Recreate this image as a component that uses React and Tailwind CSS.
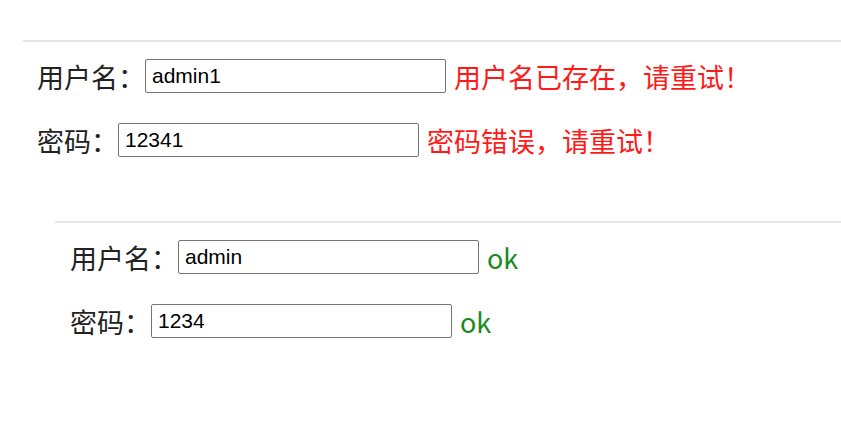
const LABEL_FONT = "font-['Microsoft_YaHei','Noto_Sans_CJK_SC',sans-serif]";

function Field({ label, value, msg, ok, className = "" }) {
  return (
    <div className={`flex items-center h-[34px] ${className}`}>
      <span className="text-[27px] leading-none text-[#222]">{label}</span>
      <input
        readOnly
        value={value}
        className="w-[301px] h-[34px] border border-[#767676] rounded-[2px] px-[6px] text-[21px] text-black font-['Liberation_Sans',Arial,sans-serif] outline-none"
      />
      <span
        className={`ml-[8px] text-[27px] leading-none ${ok ? "text-[#1a8a1a]" : "text-[#ff1a1a]"}`}
      >
        {msg}
      </span>
    </div>
  );
}

export default function App() {
  return (
    <div className={`w-[841px] h-[440px] bg-white overflow-hidden ${LABEL_FONT}`}>
      {/* 失败的情况 */}
      <div className="ml-[23px] mt-[40px]">
        <div className="h-[2px] bg-[#e6e6e6]" />
        <div className="pl-[14px]">
          <Field className="mt-[17px]" label="用户名：" value="admin1" msg="用户名已存在，请重试！" />
          <Field className="mt-[30px]" label="密码：" value="12341" msg="密码错误，请重试！" />
        </div>
      </div>

      {/* 成功的情况 */}
      <div className="ml-[55px] mt-[64px]">
        <div className="h-[2px] bg-[#e6e6e6]" />
        <div className="pl-[15px]">
          <Field className="mt-[17px]" label="用户名：" value="admin" msg="ok" ok />
          <Field className="mt-[30px]" label="密码：" value="1234" msg="ok" ok />
        </div>
      </div>
    </div>
  );
}
